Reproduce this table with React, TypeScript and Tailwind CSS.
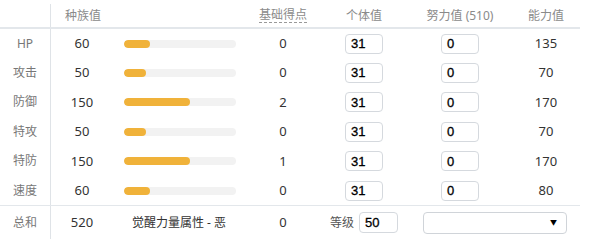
const STATS = [
  { label: "HP", base: 60, point: 0, iv: 31, ev: 0, value: 135 },
  { label: "攻击", base: 50, point: 0, iv: 31, ev: 0, value: 70 },
  { label: "防御", base: 150, point: 2, iv: 31, ev: 0, value: 170 },
  { label: "特攻", base: 50, point: 0, iv: 31, ev: 0, value: 70 },
  { label: "特防", base: 150, point: 1, iv: 31, ev: 0, value: 170 },
  { label: "速度", base: 60, point: 0, iv: 31, ev: 0, value: 80 },
];

const cols = "grid grid-cols-[51px_62px_132px_76px_86px_106px_66px]";
const font = { fontFamily: '"Noto Sans", "Noto Sans CJK SC", sans-serif' };

function NumBox({ value, w = "w-[38px]", h = "h-[20px]" }: { value: number; w?: string; h?: string }) {
  return (
    <div
      className={`${w} ${h} flex items-center rounded-[4px] border border-[#d5d9de] bg-white pl-[5px] text-[13px] font-medium text-black [font-family:'Liberation_Sans',Arial,sans-serif] [-webkit-text-stroke:0.3px_#000]`}
    >
      {value}
    </div>
  );
}

export default function App() {
  const total = STATS.reduce((s, r) => s + r.base, 0);

  return (
    <div className="w-[600px] h-[243px] bg-white pt-[4px]" style={font}>
      <div className="w-[580px]">
        {/* header */}
        <div className={`${cols} h-[25px] border-b-2 border-[#e3e7eb] text-[12px] text-[#8a8a8a]`}>
          <div className="border-r border-[#dfe3e7]" />
          <div className="col-span-2 pl-[14px] flex items-center">种族值</div>
          <div className="flex items-center justify-center">
            <span className="border-b border-dashed border-[#999] leading-[14px]">基础得点</span>
          </div>
          <div className="flex items-center justify-center">个体值</div>
          <div className="flex items-center justify-center">努力值 (510)</div>
          <div className="flex items-center justify-center">能力值</div>
        </div>

        {/* stat rows */}
        {STATS.map((s) => (
          <div key={s.label} className={`${cols} h-[29.4px] text-[13px] text-[#333]`}>
            <div className="border-r border-[#dfe3e7] flex items-center justify-center text-[12px] text-[#777]">
              {s.label}
            </div>
            <div className="flex items-center justify-center">{s.base}</div>
            <div className="flex items-center pl-[11px]">
              <div className="w-[112px] h-[8px] rounded-full bg-[#f2f2f2] overflow-hidden">
                <div className="h-full rounded-full bg-[#f0b23a]" style={{ width: `${(s.base / 255) * 112}px` }} />
              </div>
            </div>
            <div className="flex items-center justify-center">{s.point}</div>
            <div className="flex items-center justify-center">
              <NumBox value={s.iv} />
            </div>
            <div className="flex items-center justify-center">
              <NumBox value={s.ev} />
            </div>
            <div className="flex items-center justify-center">{s.value}</div>
          </div>
        ))}

        {/* total row */}
        <div className={`${cols} h-[34px] border-t border-[#e3e7eb] text-[13px] text-[#333]`}>
          <div className="border-r border-[#dfe3e7] flex items-center justify-center text-[12px] text-[#777]">
            总和
          </div>
          <div className="flex items-center justify-center">{total}</div>
          <div className="flex items-center justify-center text-[12px]">觉醒力量属性 - 恶</div>
          <div className="flex items-center justify-center">0</div>
          <div className="flex items-center justify-center gap-[5px]">
            <span className="text-[12px] text-[#555]">等级</span>
            <NumBox value={50} w="w-[39px]" h="h-[21px]" />
          </div>
          <div className="col-span-2 flex items-center pl-[16px]">
            <div className="w-[144px] h-[22px] rounded-[4px] border border-[#d0d4d9] bg-white flex items-center justify-end pr-[9px]">
              <span className="text-[7px] leading-none text-black">▼</span>
            </div>
          </div>
        </div>
      </div>
    </div>
  );
}
